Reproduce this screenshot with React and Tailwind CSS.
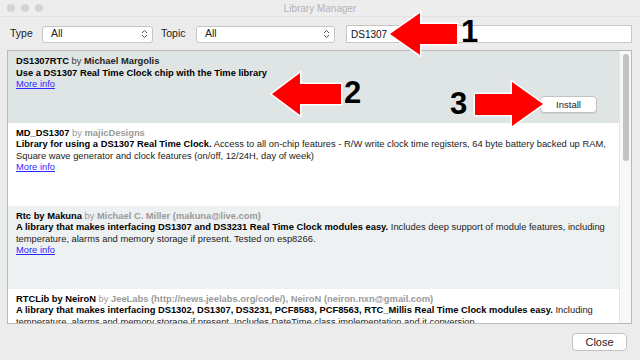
import React from 'react';

const libs = [
  {
    name: 'DS1307RTC',
    author: 'Michael Margolis',
    lead: 'Use a DS1307 Real Time Clock chip with the Time library',
    lines: [],
    bg: 'bg-[#dfe5e5]',
    selected: true,
  },
  {
    name: 'MD_DS1307',
    author: 'majicDesigns',
    lead: 'Library for using a DS1307 Real Time Clock.',
    first: ' Access to all on-chip features - R/W write clock time registers, 64 byte battery backed up RAM,',
    lines: ['Square wave generator and clock features (on/off, 12/24H, day of week)'],
    bg: 'bg-white',
  },
  {
    name: 'Rtc by Makuna',
    author: 'Michael C. Miller (makuna@live.com)',
    lead: 'A library that makes interfacing DS1307 and DS3231 Real Time Clock modules easy.',
    first: ' Includes deep support of module features, including',
    lines: ['temperature, alarms and memory storage if present. Tested on esp8266.'],
    bg: 'bg-[#edf1f1]',
  },
  {
    name: 'RTCLib by NeiroN',
    author: 'JeeLabs (http://news.jeelabs.org/code/), NeiroN (neiron.nxn@gmail.com)',
    lead: 'A library that makes interfacing DS1302, DS1307, DS3231, PCF8583, PCF8563, RTC_Millis Real Time Clock modules easy.',
    first: ' Including',
    lines: ['temperature, alarms and memory storage if present. Includes DateTime class implementation and it conversion.'],
    bg: 'bg-white',
  },
];

const Chevrons = () => (
  <svg width="7" height="10" viewBox="0 0 7 10" className="text-[#555]">
    <path d="M1 4 L3.5 1.5 L6 4 M1 6 L3.5 8.5 L6 6" fill="none" stroke="currentColor" strokeWidth="1" />
  </svg>
);

const Select = ({ width }) => (
  <div className={`${width} h-[17px] bg-white border border-[#c6c6c6] rounded-[3px] flex items-center justify-between pl-[8px] pr-[4px] text-[10.5px] text-[#222]`}>
    <span>All</span>
    <Chevrons />
  </div>
);

const LibItem = ({ lib }) => (
  <div className={`${lib.bg} pl-[8px] pr-[6px] pt-[5px] pb-[4px] text-[9.35px] leading-[11.5px] text-[#222]`}>
    <div className="whitespace-nowrap">
      <span className="font-bold text-black">{lib.name}</span>
      <span className={lib.selected ? 'text-[#444]' : 'text-[#9a9a9a]'}> by </span>
      <span className={lib.selected ? 'font-bold text-[#222]' : 'font-bold text-[#9a9a9a]'}>{lib.author}</span>
    </div>
    <div className="whitespace-nowrap">
      <span className="font-bold text-black">{lib.lead}</span>
      {lib.first && <span>{lib.first}</span>}
    </div>
    {lib.lines.map((l) => (
      <div key={l} className="whitespace-nowrap">{l}</div>
    ))}
    <div>
      <span className="text-[#2a2aff] underline">More info</span>
    </div>
    <div className="h-[28px] flex items-center justify-end pr-[16px]">
      {lib.selected && (
        <button className="w-[57px] h-[17px] bg-white border border-[#c2c2c2] rounded-[4px] text-[9.5px] text-[#222] shadow-[0_1px_0_rgba(0,0,0,0.08)]">
          Install
        </button>
      )}
    </div>
  </div>
);

export default function App() {
  return (
    <div className="relative w-[640px] h-[360px] overflow-hidden bg-[#ececec] font-['Liberation_Sans',Arial,sans-serif] flex flex-col">
      {/* title bar */}
      <div className="h-[17px] flex items-center relative border-b border-[#e2e2e2] bg-[#ededed]">
        <div className="flex gap-[6px] pl-[7px]">
          <span className="w-[8px] h-[8px] rounded-full bg-[#d4d4d4]" />
          <span className="w-[8px] h-[8px] rounded-full bg-[#d4d4d4]" />
          <span className="w-[8px] h-[8px] rounded-full bg-[#d4d4d4]" />
        </div>
        <div className="absolute inset-0 flex items-center justify-center text-[10px] text-[#b4b4b4]">Library Manager</div>
      </div>

      {/* filter row */}
      <div className="flex items-center pt-[8px] pl-[10px] pr-[8px] text-[10.5px] text-[#222]">
        <span className="w-[32px]">Type</span>
        <Select width="w-[111px]" />
        <span className="ml-[8px] w-[35px]">Topic</span>
        <Select width="w-[139px]" />
        <div className="ml-[11px] flex-1 h-[18px] bg-white border border-[#c6c6c6] flex items-center pl-[4px] text-[10px] text-[#111]">
          DS1307
        </div>
      </div>

      {/* list */}
      <div className="mt-[7px] mx-[7px] mr-[8px] h-[274px] border border-[#b9b9b9] bg-white flex overflow-hidden">
        <div className="flex-1 overflow-hidden">
          {libs.map((lib) => (
            <LibItem key={lib.name} lib={lib} />
          ))}
        </div>
        <div className="w-[12px] bg-[#f8f8f8] border-l border-[#e6e6e6] pt-[3px] flex justify-center">
          <div className="w-[6px] h-[107px] rounded-full bg-[#c2c2c2]" />
        </div>
      </div>

      {/* footer */}
      <div className="flex justify-end pr-[13px] pt-[9px]">
        <button className="w-[55px] h-[18px] bg-white border border-[#c2c2c2] rounded-[4px] text-[11px] text-[#222]">
          Close
        </button>
      </div>

      {/* annotation arrows */}
      <svg className="absolute inset-0 pointer-events-none" width="640" height="360">
        <g fill="#ff0000" stroke="#ffffff" strokeWidth="3" strokeLinejoin="miter" paintOrder="stroke">
          <polygon points="390,34 420,13 420,24 457,24 457,44 420,44 420,55" />
          <polygon points="272,94 300,73 300,84 341,84 341,104 300,104 300,115" />
          <polygon points="543,104 512,82 512,94 475,94 475,115 512,115 512,126" />
        </g>
      </svg>
      <span className="absolute left-[461px] top-[16px] text-[31px] font-bold leading-none text-black">1</span>
      <span className="absolute left-[344px] top-[77px] text-[31px] font-bold leading-none text-black">2</span>
      <span className="absolute left-[450px] top-[88px] text-[31px] font-bold leading-none text-black">3</span>
    </div>
  );
}
